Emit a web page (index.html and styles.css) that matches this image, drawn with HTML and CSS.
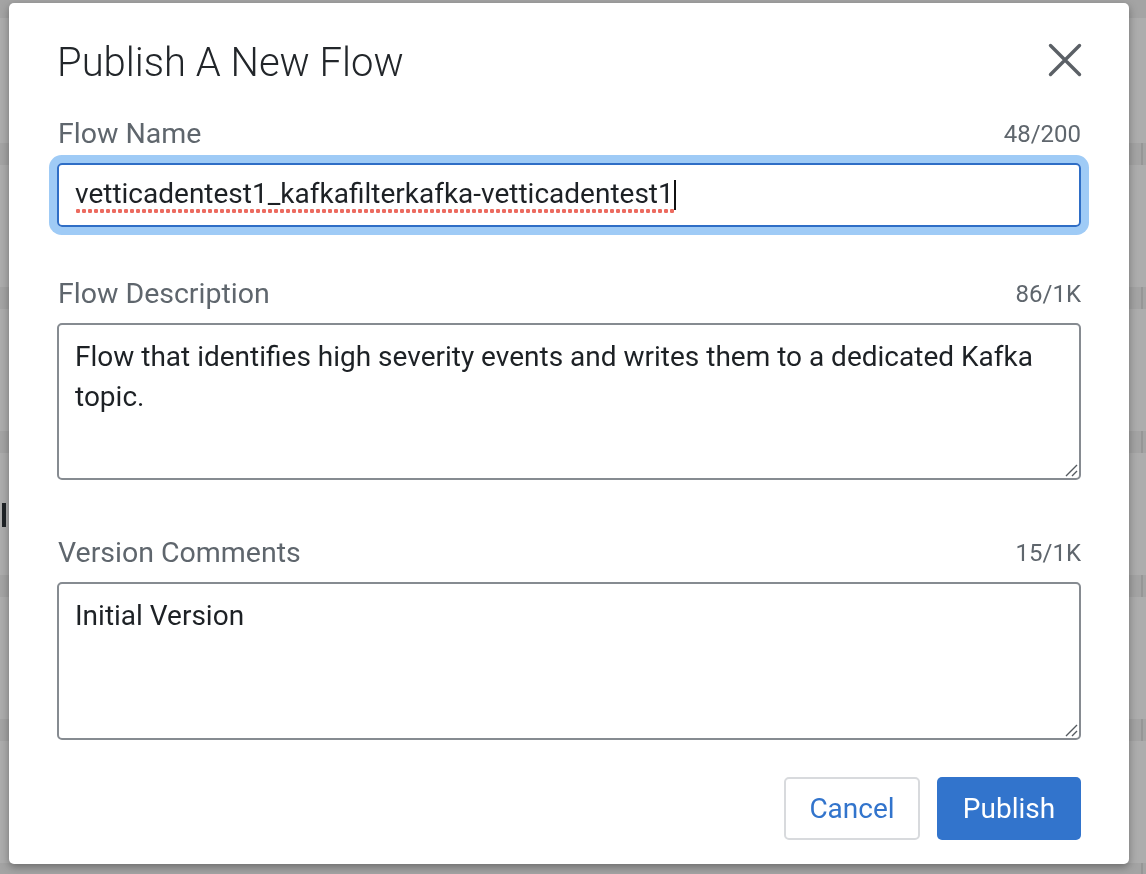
FILE: index.html
```html
<!DOCTYPE html>
<html lang="en">
<head>
<meta charset="utf-8">
<title>Publish A New Flow</title>
<link rel="stylesheet" href="styles.css">
</head>
<body>
<div class="backdrop">
  <div class="row row-first"><div class="row-head"></div></div>
  <div class="row"><div class="row-head"><span class="tick"></span></div></div>
  <div class="row"><div class="row-head"><span class="tick"></span></div></div>
  <div class="row"><div class="row-head"><span class="tick"></span></div><div class="row-body"><span class="stray"></span></div></div>
  <div class="row"><div class="row-head"><span class="tick"></span></div></div>
  <div class="row"><div class="row-head"><span class="tick"></span></div></div>
  <div class="row"><div class="row-head"><span class="tick"></span></div></div>
</div>

<div class="overlay">
  <div class="modal" role="dialog" aria-labelledby="dlg-title">
    <div class="modal-header">
      <h1 class="title" id="dlg-title">Publish A New Flow</h1>
      <button class="close" aria-label="Close">
        <svg width="34" height="34" viewBox="0 0 34 34" aria-hidden="true">
          <path d="M2.5 2.5 L31.5 31.5 M31.5 2.5 L2.5 31.5" stroke="#5b6066" stroke-width="3.4" stroke-linecap="round" fill="none"/>
        </svg>
      </button>
    </div>

    <div class="field field-name">
      <div class="field-top"><span class="label">Flow Name</span><span class="count">48/200</span></div>
      <div class="input focused"><span class="misspelled">vetticadentest1_kafkafilterkafka-vetticadentest1</span><span class="caret"></span></div>
    </div>

    <div class="field field-desc">
      <div class="field-top"><span class="label">Flow Description</span><span class="count">86/1K</span></div>
      <div class="textarea">Flow that identifies high severity events and writes them to a dedicated Kafka topic.
        <svg class="grip" width="14" height="14" viewBox="0 0 14 14" aria-hidden="true"><path d="M2 13 L13 2 M8 13 L13 8" stroke="#555a60" stroke-width="1.4" fill="none"/></svg>
      </div>
    </div>

    <div class="field field-version">
      <div class="field-top"><span class="label">Version Comments</span><span class="count">15/1K</span></div>
      <div class="textarea">Initial Version
        <svg class="grip" width="14" height="14" viewBox="0 0 14 14" aria-hidden="true"><path d="M2 13 L13 2 M8 13 L13 8" stroke="#555a60" stroke-width="1.4" fill="none"/></svg>
      </div>
    </div>

    <div class="actions">
      <button class="btn btn-secondary">Cancel</button>
      <button class="btn btn-primary">Publish</button>
    </div>
  </div>
</div>
</body>
</html>
```

FILE: styles.css
```css
* { box-sizing: border-box; }

html, body {
  margin: 0;
  padding: 0;
  height: 100%;
  overflow: hidden;
}

body {
  font-family: Roboto, "Liberation Sans", Arial, sans-serif;
  background: #adadad;
  color: #1d2125;
}

/* underlying page (dimmed) */
.backdrop {
  display: flex;
  flex-direction: column;
  height: 100%;
  overflow: hidden;
}

.row {
  height: 144px;
  display: flex;
  flex-direction: column;
  flex-shrink: 0;
}

.row-first {
  height: 143px;
}

.row-head {
  height: 22px;
  background: #a4a4a4;
  display: flex;
  justify-content: flex-end;
  padding-right: 3px;
}

.row-first .row-head {
  height: 18px;
}

.tick {
  width: 2px;
  height: 100%;
  background: #969696;
}

.row-body {
  flex: 1;
  display: flex;
  align-items: flex-start;
  padding-top: 50px;
  padding-left: 2px;
}

.stray {
  width: 4px;
  height: 24px;
  background: #1f2326;
}

/* overlay + modal */
.overlay {
  position: fixed;
  inset: 0;
  display: flex;
  align-items: flex-start;
  justify-content: flex-start;
  padding: 3px 0 0 9px;
}

.modal {
  width: 1120px;
  height: 861px;
  background: #ffffff;
  border-radius: 5px;
  box-shadow: 0 3px 8px rgba(0, 0, 0, 0.35);
  padding: 38px 48px 24px 48px;
  display: flex;
  flex-direction: column;
}

.modal-header {
  display: flex;
  justify-content: space-between;
  align-items: flex-start;
}

.title {
  margin: 0;
  font-size: 40px;
  line-height: 44px;
  font-weight: 300;
  color: #22262a;
  letter-spacing: 0;
}

.close {
  border: 0;
  background: none;
  padding: 0;
  margin: 2px -1px 0 0;
  width: 34px;
  height: 34px;
  cursor: pointer;
  display: flex;
}

.field {
  display: flex;
  flex-direction: column;
}

.field-name { margin-top: 33px; }
.field-desc { margin-top: 51px; }
.field-version { margin-top: 57px; }

.field-top {
  display: flex;
  justify-content: space-between;
  align-items: center;
  height: 32px;
  margin-bottom: 13px;
}

.label {
  font-size: 28.5px;
  color: #5f666d;
  padding-left: 1px;
  line-height: 32px;
}

.count {
  font-size: 24px;
  color: #5f666d;
}

.input {
  height: 64px;
  border: 2px solid #2f6ec6;
  border-radius: 5px;
  display: flex;
  align-items: center;
  padding-left: 16px;
  font-size: 28px;
  color: #1d2125;
}

.input.focused {
  box-shadow: 0 0 0 8px #9fcbf6;
}

.misspelled {
  background-image: radial-gradient(circle, #ec6b60 2px, transparent 2.4px);
  background-size: 6px 6px;
  background-repeat: repeat-x;
  background-position: 0 100%;
  padding-bottom: 3px;
  line-height: 34px;
}

.caret {
  width: 2px;
  height: 30px;
  background: #111;
  margin-left: 0;
}

.textarea {
  position: relative;
  border: 2px solid #868b91;
  border-radius: 5px;
  padding: 12px 16px;
  font-size: 28px;
  line-height: 40px;
  color: #1d2125;
}

.field-desc .textarea { height: 157px; }
.field-version .textarea { height: 158px; }

.grip {
  position: absolute;
  right: 1px;
  bottom: 1px;
}

.actions {
  margin-top: 37px;
  display: flex;
  justify-content: flex-end;
  gap: 17px;
}

.btn {
  height: 63px;
  font-family: inherit;
  font-size: 28px;
  border-radius: 5px;
  cursor: pointer;
}

.btn-secondary {
  width: 136px;
  background: #ffffff;
  border: 2px solid #d8dadd;
  color: #3274cc;
}

.btn-primary {
  width: 144px;
  background: #3274cc;
  border: 0;
  color: #ffffff;
}
```
